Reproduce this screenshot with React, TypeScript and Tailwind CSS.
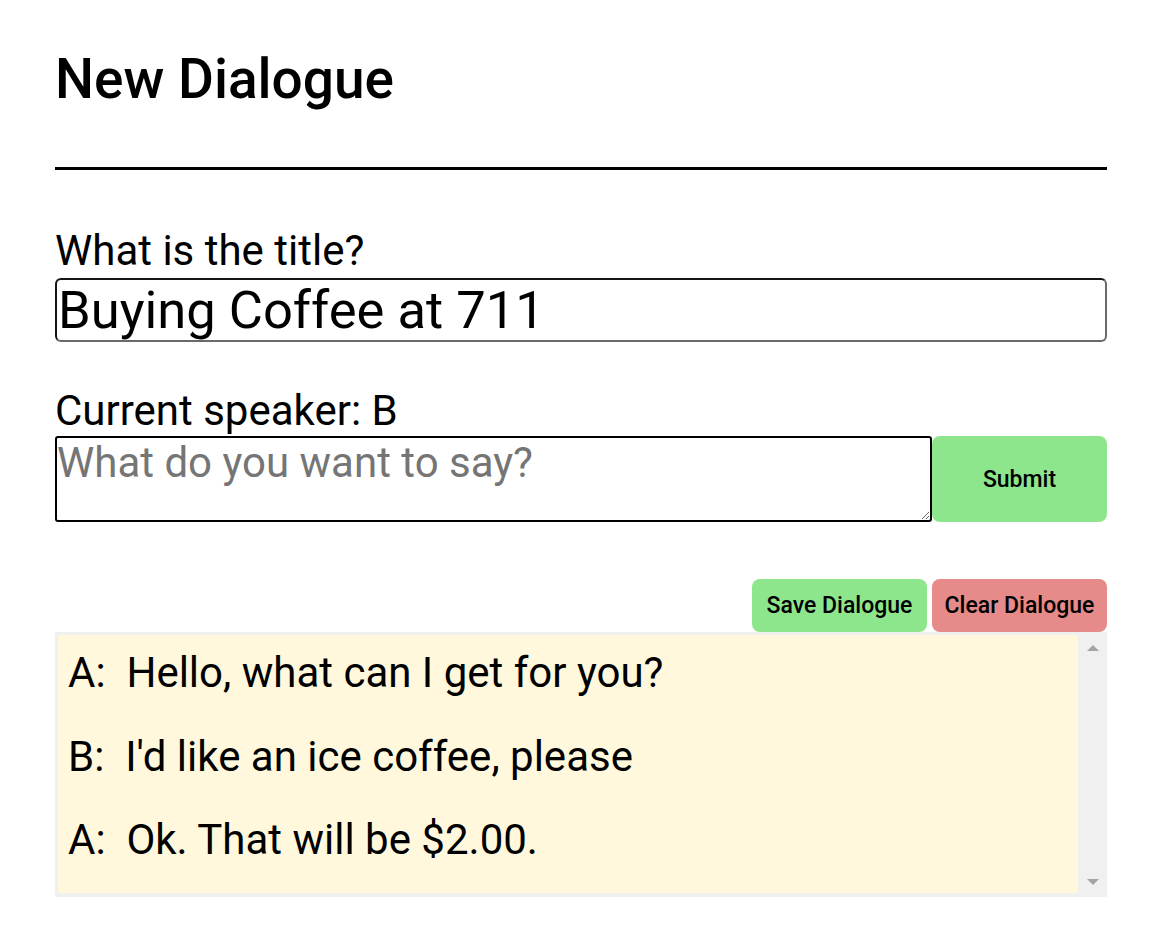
import React from "react";

export default function App() {
  const lines = [
    { s: "A", t: "Hello, what can I get for you?" },
    { s: "B", t: "I'd like an ice coffee, please" },
    { s: "A", t: "Ok. That will be $2.00." },
  ];
  return (
    <div className="min-h-[940px] bg-white text-black" style={{ fontFamily: "Roboto, 'Noto Sans', sans-serif" }}>
      <div className="ml-[55px] w-[1052px] pt-[46px]">
        <h1 className="text-[55px] font-medium leading-[66px]">New Dialogue</h1>
        <div className="mt-[55px] h-[3px] bg-black" />
        <label className="mt-[56px] block text-[42px] leading-[49px]">What is the title?</label>
        <input
          className="mt-[3px] block h-[64px] w-full rounded-[6px] border-[2.5px] border-[#6a6a6a] border-t-[#151515] border-l-[#151515] px-[1px] text-[52.5px] leading-[62px] outline-none"
          defaultValue="Buying Coffee at 711"
        />
        <label className="mt-[44px] block text-[42px] leading-[49px]">Current speaker: B</label>
        <div className="mt-[1px] flex h-[86px]">
          <textarea
            className="h-[86px] w-[877px] rounded-[3px] border-2 border-black px-0 pt-0 text-[42px] leading-[49px] outline-none placeholder:text-[#757575]"
            placeholder="What do you want to say?"
          />
          <button className="h-[86px] flex-1 rounded-[8px] bg-[#8de68c] pt-[3px] text-[23px] font-medium">Submit</button>
        </div>
        <div className="mt-[57px] flex justify-end gap-[5px]">
          <button className="h-[53px] w-[175px] rounded-[8px] bg-[#8de68c] pt-[2px] text-[23px] font-medium">Save Dialogue</button>
          <button className="h-[53px] w-[175px] rounded-[8px] bg-[#e68a8a] pt-[2px] text-[23px] font-medium">Clear Dialogue</button>
        </div>
        <div className="flex h-[265px] bg-[#f0f0f0] pl-[3px] pt-[3px] pb-[4px]">
          <div className="flex flex-1 flex-col gap-[34px] bg-[#fff8dc] pl-[10px] pt-[13px] text-[42px] leading-[49.5px]">
            {lines.map((l, i) => (
              <div key={i} className="whitespace-pre">
                {l.s}:  {l.t}
              </div>
            ))}
          </div>
          <div className="flex w-[29px] flex-col items-center justify-between pt-[10px] pb-[8px]">
            <div className="h-0 w-0 border-x-[6px] border-b-[6px] border-x-transparent border-b-[#a3a3a3]" />
            <div className="h-0 w-0 border-x-[6px] border-t-[6px] border-x-transparent border-t-[#a3a3a3]" />
          </div>
        </div>
      </div>
    </div>
  );
}
